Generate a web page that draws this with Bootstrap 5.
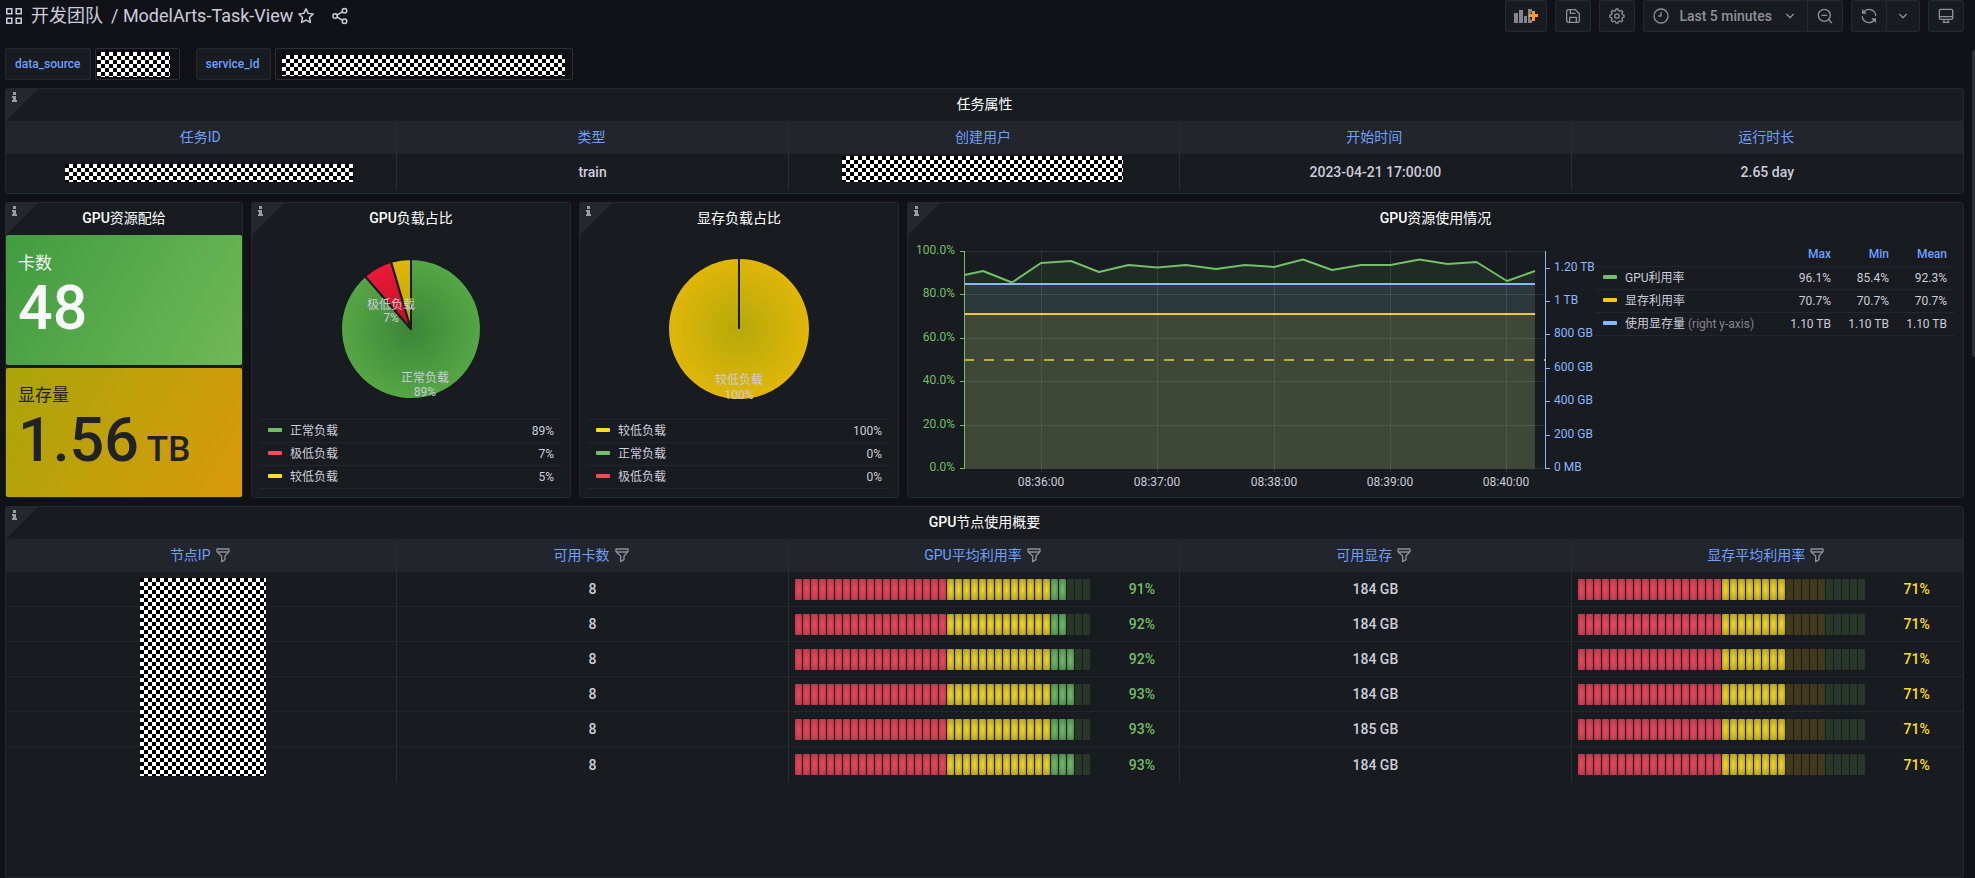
<!DOCTYPE html>
<html lang="zh-CN" data-bs-theme="dark">
<head>
<meta charset="utf-8">
<meta name="viewport" content="width=device-width, initial-scale=1">
<title>ModelArts-Task-View</title>
<link href="https://cdn.jsdelivr.net/npm/bootstrap@5.3.0/dist/css/bootstrap.min.css" rel="stylesheet">
<style>
:root { --canvas:#111217; --panel:#181b1f; --line:#25282d; --head:#22252b; --text:#ccccdc; --muted:#8e8f99; --link:#6e9fff;
  --green:#73bf69; --red:#f2495c; --yellow:#fade2a; --blue:#8ab8ff; }
body { background:var(--canvas); color:var(--text); font:14px/20px Roboto,"Noto Sans CJK SC",sans-serif; }
.page { min-height:100vh; padding:0 11px 0 5px; }
.topbar { height:48px; }
.crumbs { font-size:18px; line-height:24px; padding-top:1px; }
.crumbs a, .crumbs button { color:var(--text); text-decoration:none; }
.crumbs button { background:none; border:0; padding:0; }
svg { display:block; flex:none; }
.ico { fill:none; stroke:currentColor; stroke-width:2; stroke-linecap:round; stroke-linejoin:round; }
.tool { --bs-btn-padding-x:9px; --bs-btn-padding-y:0; --bs-btn-border-radius:2px; --bs-btn-color:var(--muted); --bs-btn-bg:var(--panel);
  --bs-btn-border-color:#26292e; --bs-btn-font-weight:500; --bs-btn-font-size:14px; height:32px; display:flex; align-items:center; }
.range-tool { line-height:20px; gap:10px; }
.var-label { height:32px; min-width:75px; padding:0 9px; border:1px solid var(--line); border-radius:2px; background:var(--panel); color:var(--link);
  font-size:12px; line-height:30px; font-weight:500; margin-right:4px; }
.var-box { position:relative; height:32px; }
.var-box select { width:100%; height:32px; appearance:none; background:var(--canvas); border:1px solid #2c2e34; border-radius:2px; }
.mask { display:block; background:repeating-conic-gradient(#fff 0 25%,#000 0 50%) 0 0/8px 8px; }
.var-box .mask { position:absolute; pointer-events:none; }
.panel { position:relative; background:var(--panel); border:1px solid var(--line); border-radius:3px; min-width:0; }
.panel-title { font-size:14px; line-height:20px; font-weight:400; text-align:center; margin:0; padding:5px 0 7px; height:32px; }
.panel-title span { font-weight:500; }
.hint { position:absolute; left:0; top:0; }
.dash { display:grid; grid-template-columns:238fr 320fr 320fr 1057fr; gap:8px; margin:8px 0; }
.grid-table { width:100%; table-layout:fixed; text-align:center; font-weight:500; border-collapse:separate; border-spacing:0; }
.grid-table th { height:33px; background:var(--head); color:var(--link); font-weight:400; padding:0 2px 2px 0; }
.grid-table td { height:35px; padding:0; }
.grid-table th:not(:last-child), .grid-table td:not(:last-child) { border-right:1px solid #2a2d33; }
.nodes tbody tr:not(:last-child) td { border-bottom:1px solid #24272c; }
.grid-table th svg { color:var(--muted); }
.mask-id { width:288px; height:18px; margin:3px 0 0 59px; }
.mask-user { width:281px; height:26px; margin:-5px 0 0 53px; }
.mask-ip { position:absolute; top:6px; left:4px; right:0; margin:0 auto; width:126px; height:198px; z-index:1; }
.tile { height:130px; padding:0 12px 7px; border-radius:2px; }
.tile-a { background:linear-gradient(120deg,#419c40,#70b858); color:#f7f8fa; }
.tile-b { background:linear-gradient(120deg,#aaa50a,#da990c); color:#202226; margin-top:3px; height:129px; }
.tile span { font-size:17px; line-height:22px; }
.tile strong { font-size:61px; line-height:68px; font-weight:500; }
.tile small { font-size:35px; line-height:1; }
.legend-table { width:100%; font-size:12px; line-height:16px; }
.legend-table td, .legend-table th { height:23px; padding:0 8px; border-bottom:1px solid #23262b; }
.legend-table td:not(:first-child), .legend-table th { text-align:right; }
.legend-table th { color:var(--link); font-weight:500; }
.pie-legend { margin:0 8px 8px; }
.pie-legend table { border-top:1px solid #23262b; }
.series { display:inline-block; width:14px; height:4px; border-radius:1px; margin-right:8px; vertical-align:3px; background:currentColor; }
.g { color:var(--green); } .r { color:var(--red); } .y { color:var(--yellow); } .o { color:#f2cc0c; } .b { color:var(--blue); }
.chart-legend { width:360px; flex:none; margin:8px 8px 0 0; }
.chart-legend td:nth-child(n+2), .chart-legend th:nth-child(n+2) { width:58px; white-space:nowrap; padding-left:0; }
text { font-size:12px; fill:var(--text); }
.axis-l text { fill:var(--green); text-anchor:end; }
.axis-r text { fill:var(--blue); }
.axis-x text, .pie text { text-anchor:middle; }
.cells { display:flex; gap:1px; padding-left:6px; align-items:center; }
.cells i { width:7px; height:21px; border-radius:1px; background:radial-gradient(var(--c) 10%,var(--e)); }
.cells i.r { --c:#e8465a; --e:#ab3848; } .cells i.y { --c:#eed329; --e:#a3921f; } .cells i.g { --c:#6eb665; --e:#4c7f4a; }
.cells i.dy { background:#42391d; } .cells i.dg { background:#29372b; }
.cells span { margin-left:38px; }
.scroll-thumb { position:fixed; right:0; top:50px; width:3px; height:35%; background:#2d2f34; border-radius:2px 0 0 2px; }
</style>
</head>
<body>
<div class="page d-flex flex-column">
  <header class="topbar d-flex justify-content-between align-items-start">
    <div class="crumbs d-flex align-items-center">
      <svg class="me-2" width="18" height="30" viewBox="0 0 18 30" fill="none" stroke="currentColor" stroke-width="1.5"><path d="M1.8 7.8h5v5h-5zM11.2 7.8h5v5h-5zM1.8 17.2h5v5h-5zM11.2 17.2h5v5h-5z"/></svg>
      <a href="#">开发团队</a><a href="#" class="ms-2">/ ModelArts-Task-View</a>
      <button aria-label="收藏" class="ms-1"><svg class="ico" width="18" height="18" viewBox="0 0 24 24"><path d="M12 2.5l2.9 6 6.6.9-4.8 4.6 1.2 6.6L12 17.4l-5.9 3.2L7.300 14 2.500 9.400l6.600-.9z"/></svg></button>
      <button aria-label="分享" class="ms-3"><svg class="ico" width="18" height="18" viewBox="0 0 24 24"><circle cx="18" cy="5" r="3"/><circle cx="5.500" cy="12" r="3"/><circle cx="18" cy="19" r="3"/><path d="M8.200 10.500l7-3.900M8.200 13.500l7 3.900"/></svg></button>
    </div>
    <div class="d-flex gap-2">
      <button class="btn tool px-2" aria-label="添加面板"><svg width="24" height="18" viewBox="0 0 24 18"><path fill="#84858f" d="M0 6h4v10H0zM5 3h4v13H5zM10 9h3v7h-3zM14 2h4v3l-2 2v5l2 1v3h-4z"/><path fill="#ff9830" d="M18 4h3v3h3v3h-3v4h-3v-4h-3V7h3z"/></svg></button>
      <button class="btn tool" aria-label="保存"><svg class="ico" width="16" height="16" viewBox="0 0 24 24"><path d="M5 2.500h10.500l6 6V19a2.500 2.500 0 0 1-2.500 2.500H5A2.500 2.500 0 0 1 2.500 19V5A2.500 2.500 0 0 1 5 2.500zM8 2.500V8h7M7 21v-7h10v7"/></svg></button>
      <button class="btn tool" aria-label="设置"><svg class="ico" width="16" height="16" viewBox="0 0 24 24"><circle cx="12" cy="12" r="3.300"/><path d="M9.800 4l.7-2.500h3l.7 2.500 2 .9 2.300-1.300 2.100 2.100-1.300 2.300.8 2 2.500.7v3l-2.500.7-.8 2 1.300 2.300-2.100 2.100-2.300-1.300-2 .8-.7 2.500h-3l-.7-2.500-2-.8-2.300 1.300-2.100-2.100 1.300-2.300-.9-2-2.500-.7v-3l2.500-.7.9-2-1.300-2.300 2.100-2.100 2.300 1.300z"/></svg></button>
      <div class="btn-group">
        <button class="btn tool range-tool"><svg class="ico" width="16" height="16" viewBox="0 0 24 24"><circle cx="12" cy="12" r="10.500"/><path d="M12 6.500V12H8.500"/></svg>Last 5 minutes<svg class="ico" width="16" height="16" viewBox="0 0 24 24"><path d="M7 9.500l5 5 5-5"/></svg></button>
        <button class="btn tool" aria-label="缩小时间范围"><svg class="ico" width="16" height="16" viewBox="0 0 24 24"><circle cx="11" cy="11" r="9"/><path d="M7.500 11h7M17.500 17.500L22 22"/></svg></button>
      </div>
      <div class="btn-group">
        <button class="btn tool" aria-label="刷新"><svg class="ico" width="16" height="16" viewBox="0 0 24 24"><path d="M2.500 3v4.500H7M3.500 7A10 10 0 0 1 22 11M21.500 21v-4.500H17M20.500 17A10 10 0 0 1 2 13"/></svg></button>
        <button class="btn tool px-2" aria-label="刷新间隔"><svg class="ico" width="16" height="16" viewBox="0 0 24 24"><path d="M7 9.500l5 5 5-5"/></svg></button>
      </div>
      <button class="btn tool" aria-label="视图模式"><svg class="ico" width="16" height="16" viewBox="0 0 24 24"><path d="M4 2h16a2 2 0 0 1 2 2v11a2 2 0 0 1-2 2H4a2 2 0 0 1-2-2V4a2 2 0 0 1 2-2zM2 13h20M9 17v4M15 17v4M7.500 21.500h9"/></svg></button>
    </div>
  </header>

  <form class="d-flex mb-2">
    <label class="var-label" for="ds">data_source</label>
    <div class="var-box" style="width:85px;margin-right:16px"><select id="ds"></select><span class="mask" style="left:2px;top:4px;width:73px;height:25px"></span></div>
    <label class="var-label" for="sid">service_id</label>
    <div class="var-box" style="width:298px"><select id="sid"></select><span class="mask" style="left:7px;top:7px;width:283px;height:21px"></span></div>
  </form>

  <section class="panel pb-1">
    <svg class="hint" width="32" height="32"><path fill="#24282d" d="M0 0h32L0 32z"/><path fill="#9a9ba3" d="M7 3h3v3H7zM6 7h4v4h1v2H6v-2h1V9H6z"/></svg>
    <h2 class="panel-title">任务属性</h2>
    <table class="grid-table">
      <thead><tr><th>任务ID</th><th>类型</th><th>创建用户</th><th>开始时间</th><th>运行时长</th></tr></thead>
      <tbody><tr><td><span class="mask mask-id"></span></td><td>train</td><td><span class="mask mask-user"></span></td><td>2023-04-21 17:00:00</td><td>2.65 day</td></tr></tbody>
    </table>
  </section>

  <main class="dash">
    <section class="panel">
      <svg class="hint" width="32" height="32"><path fill="#24282d" d="M0 0h32L0 32z"/><path fill="#9a9ba3" d="M7 3h3v3H7zM6 7h4v4h1v2H6v-2h1V9H6z"/></svg>
      <h2 class="panel-title"><span>GPU</span>资源配给</h2>
      <div class="tile tile-a d-flex flex-column justify-content-center"><span>卡数</span><strong>48</strong></div>
      <div class="tile tile-b d-flex flex-column justify-content-center"><span>显存量</span><strong>1.56<small> TB</small></strong></div>
    </section>

    <section class="panel">
      <svg class="hint" width="32" height="32"><path fill="#24282d" d="M0 0h32L0 32z"/><path fill="#9a9ba3" d="M7 3h3v3H7zM6 7h4v4h1v2H6v-2h1V9H6z"/></svg>
      <h2 class="panel-title"><span>GPU</span>负载占比</h2>
      <svg class="pie w-100" height="184" viewBox="-159 -94 318 184">
        <defs>
          <radialGradient id="pg" gradientUnits="userSpaceOnUse" cx="0" cy="0" r="70"><stop offset="0" stop-color="#3c8538"/><stop offset="1" stop-color="#56a746"/></radialGradient>
          <radialGradient id="pr" gradientUnits="userSpaceOnUse" cx="0" cy="0" r="70"><stop offset="0" stop-color="#c00e1e"/><stop offset="1" stop-color="#eb1a3b"/></radialGradient>
          <radialGradient id="py" gradientUnits="userSpaceOnUse" cx="0" cy="0" r="70"><stop offset="0" stop-color="#b5a90a"/><stop offset="1" stop-color="#e0b609"/></radialGradient>
        </defs>
        <g stroke="#181b1f" stroke-width="2" stroke-linejoin="round">
          <path fill="url(#pg)" d="M0 0V-70A70 70 0 1 1-46-52.800z"/>
          <path fill="url(#pr)" d="M0 0L-46-52.800A70 70 0 0 1-19.900-67.100z"/>
          <path fill="url(#py)" d="M0 0L-19.900-67.100A70 70 0 0 1 0-70z"/>
        </g>
        <text x="-20" y="-20">极低负载</text><text x="-20" y="-7">7%</text>
        <text x="14" y="53">正常负载</text><text x="14" y="67">89%</text>
      </svg>
      <div class="pie-legend"><table class="legend-table">
        <tr><td><i class="series g"></i>正常负载</td><td>89%</td></tr>
        <tr><td><i class="series r"></i>极低负载</td><td>7%</td></tr>
        <tr><td><i class="series y"></i>较低负载</td><td>5%</td></tr>
      </table></div>
    </section>

    <section class="panel">
      <svg class="hint" width="32" height="32"><path fill="#24282d" d="M0 0h32L0 32z"/><path fill="#9a9ba3" d="M7 3h3v3H7zM6 7h4v4h1v2H6v-2h1V9H6z"/></svg>
      <h2 class="panel-title">显存负载占比</h2>
      <svg class="pie w-100" height="184" viewBox="-159 -94 318 184">
        <circle r="70" fill="url(#py)"/><path d="M0-70V0" stroke="#181b1f" stroke-width="2"/>
        <text x="0" y="55">较低负载</text><text x="0" y="70">100%</text>
      </svg>
      <div class="pie-legend"><table class="legend-table">
        <tr><td><i class="series y"></i>较低负载</td><td>100%</td></tr>
        <tr><td><i class="series g"></i>正常负载</td><td>0%</td></tr>
        <tr><td><i class="series r"></i>极低负载</td><td>0%</td></tr>
      </table></div>
    </section>

    <section class="panel">
      <svg class="hint" width="32" height="32"><path fill="#24282d" d="M0 0h32L0 32z"/><path fill="#9a9ba3" d="M7 3h3v3H7zM6 7h4v4h1v2H6v-2h1V9H6z"/></svg>
      <h2 class="panel-title"><span>GPU</span>资源使用情况</h2>
      <div class="d-flex">
        <div class="flex-fill">
        <svg class="w-100 overflow-visible" height="262" viewBox="0 0 680 262" preserveAspectRatio="xMinYMin">
          <path fill="#73bf69" fill-opacity=".1" d="M56.500 40L75 36l29 11.500L133 28l30-2 28 11 29.500-7 29 2.500L278 30l30 4 29-4 29 2 29-7.500 29 10.500 29-5h29.500l29-5.500 28 4.500 29-2L599 46l28-10v197.500H56.500z"/>
          <path fill="#8ab8ff" fill-opacity=".1" d="M56.500 49H627v184.500H56.500z"/>
          <path fill="#f2cc0c" fill-opacity=".1" d="M56.500 79H627v154.500H56.500z"/>
          <path stroke="#ccccdc" stroke-opacity=".12" fill="none" d="M53 16.500h584M53 59.500h584M53 103.500h584M53 146.500h584M53 190.500h584M53 233.500h584M133.500 16v221M249.500 16v221M366.500 16v221M482.500 16v221M598.500 16v221"/>
          <path stroke="#b8ae42" stroke-width="2" stroke-dasharray="10 10" d="M56 125h581"/>
          <path stroke="#f2cc26" stroke-width="2" d="M56 79h571"/>
          <path stroke="#8ab8ff" stroke-width="2" d="M56 49h571"/>
          <path stroke="#73bf69" stroke-width="2" fill="none" stroke-linejoin="round" d="M56.500 40L75 36l29 11.500L133 28l30-2 28 11 29.500-7 29 2.500L278 30l30 4 29-4 29 2 29-7.500 29 10.500 29-5h29.500l29-5.500 28 4.500 29-2L599 46l28-10"/>
          <path stroke="#73bf69" fill="none" d="M56.500 16v218M52 16.500h4M52 59.500h4M52 103.500h4M52 146.500h4M52 190.500h4M52 233.500h4"/>
          <path stroke="#8ab8ff" fill="none" d="M637.500 16v218M638 33.500h4M638 66.500h4M638 99.500h4M638 133.500h4M638 166.500h4M638 200.500h4M638 233.500h4"/>
          <g class="axis-l"><text x="47" y="19">100.0%</text><text x="47" y="62">80.0%</text><text x="47" y="106">60.0%</text><text x="47" y="149">40.0%</text><text x="47" y="193">20.0%</text><text x="47" y="236">0.0%</text></g>
          <g class="axis-r"><text x="646" y="36">1.20 TB</text><text x="646" y="69">1 TB</text><text x="646" y="102">800 GB</text><text x="646" y="136">600 GB</text><text x="646" y="169">400 GB</text><text x="646" y="203">200 GB</text><text x="646" y="236">0 MB</text></g>
          <g class="axis-x"><text x="133" y="251">08:36:00</text><text x="249" y="251">08:37:00</text><text x="366" y="251">08:38:00</text><text x="482" y="251">08:39:00</text><text x="598" y="251">08:40:00</text></g>
        </svg>
        </div>
        <div class="chart-legend"><table class="legend-table">
          <thead><tr><th></th><th>Max</th><th>Min</th><th>Mean</th></tr></thead>
          <tbody>
          <tr><td><i class="series g"></i>GPU利用率</td><td>96.1%</td><td>85.4%</td><td>92.3%</td></tr>
          <tr><td><i class="series o"></i>显存利用率</td><td>70.7%</td><td>70.7%</td><td>70.7%</td></tr>
          <tr><td><i class="series b"></i>使用显存量 <span style="color:#84858f">(right y-axis)</span></td><td>1.10 TB</td><td>1.10 TB</td><td>1.10 TB</td></tr>
          </tbody>
        </table></div>
      </div>
    </section>
  </main>

  <section class="panel flex-fill">
    <svg class="hint" width="32" height="32"><path fill="#24282d" d="M0 0h32L0 32z"/><path fill="#9a9ba3" d="M7 3h3v3H7zM6 7h4v4h1v2H6v-2h1V9H6z"/></svg>
    <h2 class="panel-title"><span>GPU</span>节点使用概要</h2>
    <table class="grid-table nodes">
      <thead><tr id="heads"></tr></thead>
      <tbody id="rows"></tbody>
    </table>
  </section>
</div>
<div class="scroll-thumb"></div>
<script src="https://cdn.jsdelivr.net/npm/bootstrap@5.3.0/dist/js/bootstrap.bundle.min.js"></script>
<script>
const funnel = '<svg class="ico" width="16" height="16" viewBox="0 0 24 24"><path d="M3 3h18v4l-6 6.500V19l-5 3v-8.500L3 7zM4 7.500h16"/></svg>';
document.getElementById('heads').innerHTML = ['节点IP', '可用卡数', 'GPU平均利用率', '可用显存', '显存平均利用率']
  .map(t => `<th><span class="d-flex justify-content-center align-items-center gap-1">${t}${funnel}</span></th>`).join('');

// Each gauge is a list of [cell class, number of cells].
const gauge = (parts, tone, label) => '<div class="cells">' +
  parts.map(([c, n]) => `<i class="${c}"></i>`.repeat(n)).join('') + `<span class="${tone}">${label}</span></div>`;
const nodes = [[91, 2, 184], [92, 2, 184], [92, 3, 184], [93, 3, 184], [93, 3, 185], [93, 3, 184]];
document.getElementById('rows').innerHTML = nodes.map(([use, lit, mem], i) => `<tr>
  <td class="position-relative">${i ? '' : '<span class="mask mask-ip"></span>'}</td><td>8</td>
  <td>${gauge([['r', 19], ['y', 13], ['g', lit], ['dg', 5 - lit]], 'g', use + '%')}</td>
  <td>${mem} GB</td>
  <td>${gauge([['r', 18], ['y', 8], ['dy', 5], ['dg', 5]], 'y', '71%')}</td></tr>`).join('');
</script>
</body>
</html>
